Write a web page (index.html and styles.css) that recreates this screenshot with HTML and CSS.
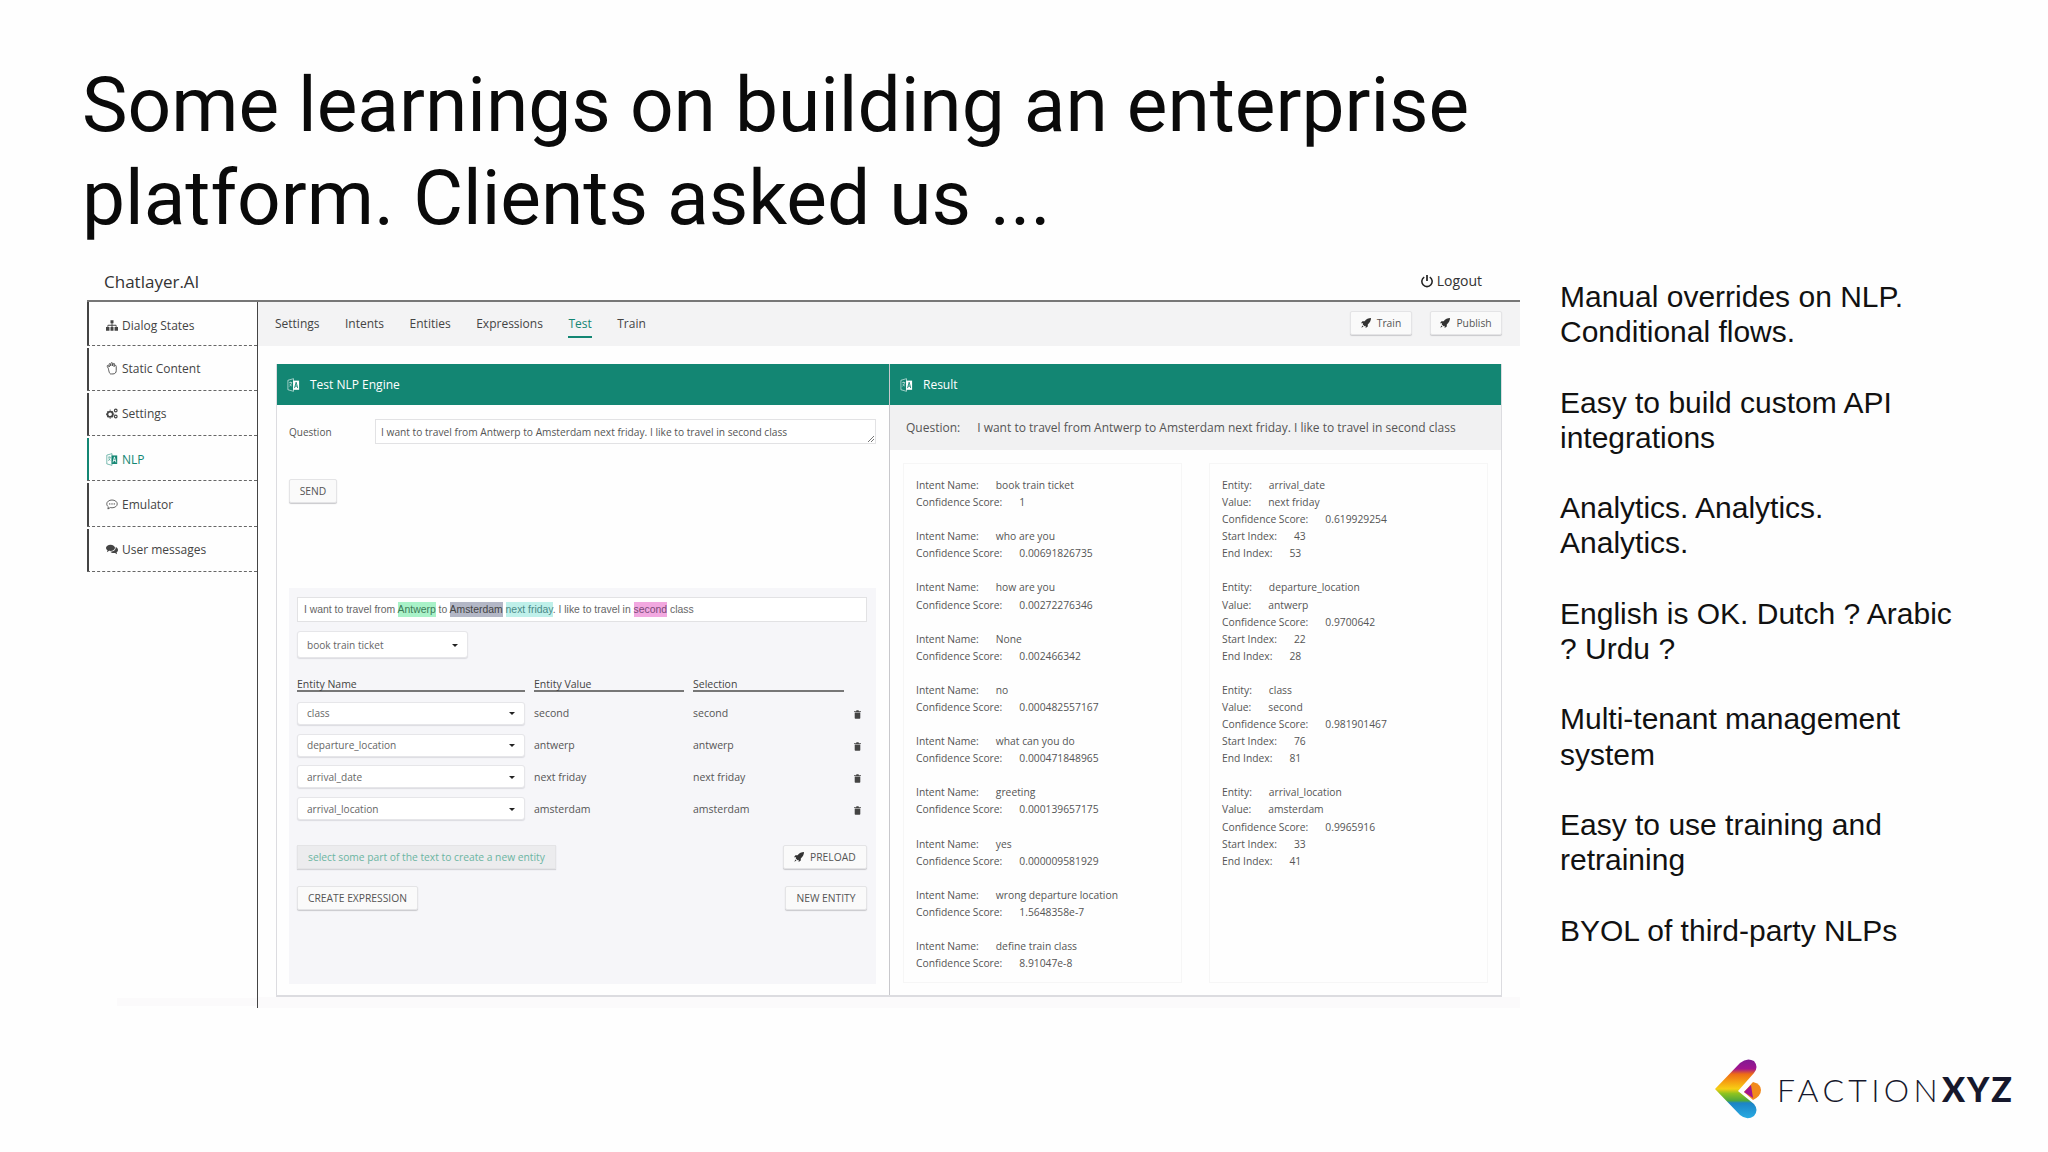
FILE: index.html
```html
<!DOCTYPE html>
<html lang="en">
<head>
<meta charset="utf-8">
<title>Some learnings on building an enterprise platform</title>
<link rel="stylesheet" href="styles.css">
</head>
<body>
<svg class="defs" width="0" height="0" aria-hidden="true">
  <defs>
    <symbol id="i-sitemap" viewBox="0 0 16 14"><path d="M6 0h4v4H8.600v2H13a1 1 0 0 1 1 1v2h2v5h-4.600V9h1.600V7.200H8.600V9H10v5H6V9h1.400V7.200H3V9h1.600v5H0V9h2V7a1 1 0 0 1 1-1h4.400V4H6z" fill="currentColor"/></symbol>
    <symbol id="i-hand" viewBox="0 0 14 16"><path d="M2.500 8 1.200 5.500c-.6-1.100.8-1.900 1.500-.9l1 1.500L3.400 3c-.1-1.200 1.500-1.400 1.700-.2l.4 2 .3-3.200c.1-1.200 1.700-1.200 1.800 0l.2 3.200.7-2.500c.3-1.100 1.800-.8 1.600.4l-.6 3 1-1.200c.8-.9 2 0 1.700 1v5.200c0 2.400-1.700 4-4 4H6.500C4 15.500 3.300 12 2.500 8z" fill="none" stroke="currentColor" stroke-width="1.100"/></symbol>
    <symbol id="i-cogs" viewBox="0 0 16 14"><circle cx="5.500" cy="8" r="3.600" fill="none" stroke="currentColor" stroke-width="2.400"/><path d="M5 2.500h1M5 13.500h1M0 8h1M10 8h1M1.800 4.300l.7.700M8.500 11l.7.700M1.800 11.700l.7-.7M8.500 5l.7-.7" stroke="currentColor" stroke-width="1.800"/><circle cx="13" cy="3" r="1.800" fill="none" stroke="currentColor" stroke-width="1.500"/><circle cx="13" cy="11" r="1.800" fill="none" stroke="currentColor" stroke-width="1.500"/></symbol>
    <symbol id="i-lang" viewBox="0 0 14 16"><path d="M.6 2.600 7 .8v14.400L.6 13.400z" fill="none" stroke="currentColor" stroke-width=".9" opacity=".75"/><path d="M6.500 3H13.400v10.500H6.500z" fill="currentColor"/><path d="M8.200 11.500 10 4.800l1.800 6.700M8.800 9.300h2.400" fill="none" stroke="var(--glyph,#fff)" stroke-width="1"/><path d="M2 5.200h3.400M3.700 4.200v1M5 5.200c-.4 2-1.400 3.500-2.800 4.500M2.700 6.700c.5 1.200 1.300 2 2.400 2.500" fill="none" stroke="currentColor" stroke-width=".6"/></symbol>
    <symbol id="i-comment" viewBox="0 0 16 14"><path d="M8 1c3.900 0 7 2.300 7 5.200s-3.100 5.200-7 5.200c-.8 0-1.500-.1-2.200-.3L2.500 13l.6-2.900C1.800 9.100 1 7.700 1 6.200 1 3.300 4.100 1 8 1z" fill="none" stroke="currentColor" stroke-width="1.100"/><circle cx="5" cy="6.200" r=".9" fill="currentColor"/><circle cx="8" cy="6.200" r=".9" fill="currentColor"/><circle cx="11" cy="6.200" r=".9" fill="currentColor"/></symbol>
    <symbol id="i-comments" viewBox="0 0 16 14"><path d="M6 .5c3.300 0 6 1.900 6 4.200S9.300 9 6 9c-.6 0-1.200-.1-1.800-.2L1.200 10.500l.8-2.400C.8 7.300 0 6.100 0 4.700 0 2.400 2.700.5 6 .5z" fill="currentColor"/><path d="M13 3.800c1.800.7 3 2.100 3 3.700 0 1.300-.7 2.400-1.900 3.200l.7 2.500-2.800-1.700c-.6.100-1.100.2-1.700.2-1.900 0-3.600-.7-4.600-1.800 3.800.3 7.500-1.800 7.300-6.100z" fill="currentColor"/></symbol>
    <symbol id="i-rocket" viewBox="0 0 14 14"><path d="M14 0C10.500 0 7.500 1.500 5 4.500H2L0 7.500h3L2.500 9 5 11.500 6.500 11v3l3-2V9c3-2.500 4.500-5.500 4.500-9z" fill="currentColor"/><path d="M2 10.500.5 13.500l3-1.500z" fill="currentColor"/></symbol>
    <symbol id="i-trash" viewBox="0 0 10 12"><path d="M3.500 0h3l.5 1.200h3V2.500H0V1.200h3zM1 3.200h8V11a1 1 0 0 1-1 1H2a1 1 0 0 1-1-1z" fill="currentColor"/></symbol>
    <symbol id="i-power" viewBox="0 0 14 16"><path d="M7 1v7" stroke="currentColor" stroke-width="2" fill="none"/><path d="M3.800 3.500a6 6 0 1 0 6.400 0" stroke="currentColor" stroke-width="1.800" fill="none"/></symbol>
    <linearGradient id="logo-grad" x1="0" y1="0" x2="0" y2="1">
      <stop offset="0" stop-color="#7e1a93"/>
      <stop offset=".16" stop-color="#a2148f"/>
      <stop offset=".25" stop-color="#ee6c16"/>
      <stop offset=".38" stop-color="#f6a012"/>
      <stop offset=".5" stop-color="#f7cf14"/>
      <stop offset=".58" stop-color="#8fc31f"/>
      <stop offset=".7" stop-color="#4fa83d"/>
      <stop offset=".74" stop-color="#1c84c6"/>
      <stop offset="1" stop-color="#29abe2"/>
    </linearGradient>
  </defs>
</svg>

<div class="slide">
  <h1 class="title">Some learnings on building an enterprise<br>platform. Clients asked us ...</h1>

  <div class="content">
    <div class="app">
      <header class="app-top">
        <span class="brand">Chatlayer.AI</span>
        <span class="logout"><svg class="ic-power"><use href="#i-power"/></svg>Logout</span>
      </header>
      <div class="app-body">
        <nav class="side">
          <a class="side-item"><svg class="ic"><use href="#i-sitemap"/></svg>Dialog States</a>
          <a class="side-item"><svg class="ic"><use href="#i-hand"/></svg>Static Content</a>
          <a class="side-item"><svg class="ic"><use href="#i-cogs"/></svg>Settings</a>
          <a class="side-item is-active"><svg class="ic"><use href="#i-lang"/></svg>NLP</a>
          <a class="side-item"><svg class="ic"><use href="#i-comment"/></svg>Emulator</a>
          <a class="side-item"><svg class="ic"><use href="#i-comments"/></svg>User messages</a>
        </nav>
        <main class="main">
          <div class="tabs">
            <a class="tab">Settings</a>
            <a class="tab">Intents</a>
            <a class="tab">Entities</a>
            <a class="tab">Expressions</a>
            <a class="tab is-active">Test</a>
            <a class="tab">Train</a>
            <div class="tab-actions">
              <button class="btn btn-train"><svg class="ic-rocket"><use href="#i-rocket"/></svg>Train</button>
              <button class="btn btn-publish"><svg class="ic-rocket"><use href="#i-rocket"/></svg>Publish</button>
            </div>
          </div>
          <div class="panels">
            <section class="panel">
              <h2 class="panel-head"><svg class="ic-head"><use href="#i-lang"/></svg>Test NLP Engine</h2>
              <div class="test-body">
                <div class="q-row">
                  <label class="q-label">Question</label>
                  <div class="q-input">I want to travel from Antwerp to Amsterdam next friday. I like to travel in second class</div>
                </div>
                <button class="btn btn-send">SEND</button>
                <div class="sandbox">
                  <div class="sentence">I want to travel from <mark class="m-green">Antwerp</mark> to <mark class="m-slate">Amsterdam</mark> <mark class="m-cyan">next friday</mark>. I like to travel in <mark class="m-pink">second</mark> class</div>
                  <div class="select select-intent">book train ticket</div>
                  <div class="entity-grid">
                    <div class="eh">Entity Name</div><div class="eh">Entity Value</div><div class="eh">Selection</div><div></div>
                    <div class="select">class</div><div>second</div><div>second</div><svg class="ic-trash"><use href="#i-trash"/></svg>
                    <div class="select">departure_location</div><div>antwerp</div><div>antwerp</div><svg class="ic-trash"><use href="#i-trash"/></svg>
                    <div class="select">arrival_date</div><div>next friday</div><div>next friday</div><svg class="ic-trash"><use href="#i-trash"/></svg>
                    <div class="select">arrival_location</div><div>amsterdam</div><div>amsterdam</div><svg class="ic-trash"><use href="#i-trash"/></svg>
                  </div>
                  <div class="act-row act-first">
                    <div class="hint">select some part of the text to create a new entity</div>
                    <button class="btn btn-preload"><svg class="ic-rocket"><use href="#i-rocket"/></svg>PRELOAD</button>
                  </div>
                  <div class="act-row">
                    <button class="btn btn-wide">CREATE EXPRESSION</button>
                    <button class="btn btn-new">NEW ENTITY</button>
                  </div>
                </div>
              </div>
            </section>
            <section class="panel panel-result">
              <h2 class="panel-head"><svg class="ic-head"><use href="#i-lang"/></svg>Result</h2>
              <div class="q-strip"><span>Question:</span><span>I want to travel from Antwerp to Amsterdam next friday. I like to travel in second class</span></div>
              <div class="cards">
                <div class="card">
                  <dl class="kv"><div><dt>Intent Name:</dt><dd>book train ticket</dd></div><div><dt>Confidence Score:</dt><dd>1</dd></div></dl>
                  <dl class="kv"><div><dt>Intent Name:</dt><dd>who are you</dd></div><div><dt>Confidence Score:</dt><dd>0.00691826735</dd></div></dl>
                  <dl class="kv"><div><dt>Intent Name:</dt><dd>how are you</dd></div><div><dt>Confidence Score:</dt><dd>0.00272276346</dd></div></dl>
                  <dl class="kv"><div><dt>Intent Name:</dt><dd>None</dd></div><div><dt>Confidence Score:</dt><dd>0.002466342</dd></div></dl>
                  <dl class="kv"><div><dt>Intent Name:</dt><dd>no</dd></div><div><dt>Confidence Score:</dt><dd>0.000482557167</dd></div></dl>
                  <dl class="kv"><div><dt>Intent Name:</dt><dd>what can you do</dd></div><div><dt>Confidence Score:</dt><dd>0.000471848965</dd></div></dl>
                  <dl class="kv"><div><dt>Intent Name:</dt><dd>greeting</dd></div><div><dt>Confidence Score:</dt><dd>0.000139657175</dd></div></dl>
                  <dl class="kv"><div><dt>Intent Name:</dt><dd>yes</dd></div><div><dt>Confidence Score:</dt><dd>0.000009581929</dd></div></dl>
                  <dl class="kv"><div><dt>Intent Name:</dt><dd>wrong departure location</dd></div><div><dt>Confidence Score:</dt><dd>1.5648358e-7</dd></div></dl>
                  <dl class="kv"><div><dt>Intent Name:</dt><dd>define train class</dd></div><div><dt>Confidence Score:</dt><dd>8.91047e-8</dd></div></dl>
                </div>
                <div class="card card-entities">
                  <dl class="kv"><div><dt>Entity:</dt><dd>arrival_date</dd></div><div><dt>Value:</dt><dd>next friday</dd></div><div><dt>Confidence Score:</dt><dd>0.619929254</dd></div><div><dt>Start Index:</dt><dd>43</dd></div><div><dt>End Index:</dt><dd>53</dd></div></dl>
                  <dl class="kv"><div><dt>Entity:</dt><dd>departure_location</dd></div><div><dt>Value:</dt><dd>antwerp</dd></div><div><dt>Confidence Score:</dt><dd>0.9700642</dd></div><div><dt>Start Index:</dt><dd>22</dd></div><div><dt>End Index:</dt><dd>28</dd></div></dl>
                  <dl class="kv"><div><dt>Entity:</dt><dd>class</dd></div><div><dt>Value:</dt><dd>second</dd></div><div><dt>Confidence Score:</dt><dd>0.981901467</dd></div><div><dt>Start Index:</dt><dd>76</dd></div><div><dt>End Index:</dt><dd>81</dd></div></dl>
                  <dl class="kv"><div><dt>Entity:</dt><dd>arrival_location</dd></div><div><dt>Value:</dt><dd>amsterdam</dd></div><div><dt>Confidence Score:</dt><dd>0.9965916</dd></div><div><dt>Start Index:</dt><dd>33</dd></div><div><dt>End Index:</dt><dd>41</dd></div></dl>
                </div>
              </div>
            </section>
          </div>
        </main>
      </div>
    </div>

    <ul class="points">
      <li>Manual overrides on NLP. Conditional flows.</li>
      <li>Easy to build custom API integrations</li>
      <li>Analytics. Analytics. Analytics.</li>
      <li>English is OK. Dutch ? Arabic ? Urdu ?</li>
      <li>Multi-tenant management system</li>
      <li>Easy to use training and retraining</li>
      <li>BYOL of third-party NLPs</li>
    </ul>
  </div>

  <footer class="foot">
    <svg class="logo-mark" viewBox="0 0 46 61" aria-hidden="true">
      <path d="M0 31 25 5Q32-1 39 3 44 9 39 15L23 33 39 46Q44 52 39 58 32 63 25 57Z" fill="url(#logo-grad)"/>
      <path d="M29 34 38 24Q46 26 46 32 46 38 38 42Z" fill="#f28a1c"/>
      <path d="M29 34 36 27 38 40Z" fill="#a2148f"/>
    </svg>
    <span class="logo-text">FACTION<b>XYZ</b></span>
  </footer>
</div>
</body>
</html>
```
FILE: styles.css
```css
* { box-sizing: border-box; }
html, body { margin: 0; padding: 0; background: #fefefe; }
.defs { position: absolute; }
.slide {
  width: 2048px;
  height: 1152px;
  overflow: hidden;
  display: flex;
  flex-direction: column;
  font-family: "Open Sans", sans-serif;
  color: #555;
}
.title {
  margin: 59px 0 15px 82px;
  font: 400 76.650px/93px Roboto, sans-serif;
  color: #0a0a0a;
}
.content { display: flex; align-items: flex-start; }

/* app window */
.app { width: 1433px; margin-left: 87px; flex: none; }
.app-top {
  height: 42px;
  display: flex;
  align-items: center;
  justify-content: space-between;
  padding: 3px 38px 0 17px;
  border-bottom: 2px solid #777;
  color: #333;
}
.brand { font-size: 17px; }
.logout { display: flex; align-items: center; gap: 4px; font-size: 14px; margin-top: -2px; }
.ic-power { width: 12px; height: 14px; color: #222; }
.app-body { display: flex; height: 706px; }
.side {
  width: 171px;
  flex: none;
  border-right: 1px solid #444;
  background: linear-gradient(to top, transparent 0 2px, #fbfafb 2px 10px, transparent 10px) no-repeat 30px 0 / 140px 100%;
}
.side-item {
  height: 45.300px;
  display: flex;
  align-items: center;
  gap: 4px;
  padding: 2px 0 0 19px;
  font-size: 12px;
  color: #444;
  border-bottom: 1px dashed #666;
  background: linear-gradient(#444, #444) no-repeat 0 2px / 2px calc(100% - 2px);
}
.side-item:first-child { height: 43.500px; padding-top: 4px; background-position: 0 0; background-size: 2px 100%; }
.side-item.is-active { background-image: linear-gradient(#138673, #138673); color: #138673; --glyph: #fff; }
.ic { width: 12px; height: 13px; flex: none; }
.main {
  flex: 1;
  display: flex;
  flex-direction: column;
  background: linear-gradient(to top, #fbfafb 0 11px, #fefefe 11px);
}

.tabs {
  height: 44px;
  flex: none;
  display: flex;
  align-items: center;
  gap: 25.500px;
  padding: 0 18px 2px 17px;
  background: #f3f3f4;
  font-size: 12px;
  color: #444;
}
.tab { position: relative; }
.tab.is-active { color: #138673; }
.tab.is-active::after {
  content: "";
  position: absolute;
  left: 0;
  right: 0;
  bottom: -6px;
  height: 2px;
  background: #138673;
}
.tab-actions { margin-left: auto; display: flex; gap: 18px; }
.btn {
  height: 24px;
  padding: 0 10px;
  display: inline-flex;
  align-items: center;
  gap: 6px;
  background: #fafafa;
  border: 1px solid #e4e4e6;
  border-radius: 2px;
  box-shadow: 0 1px 1px #c9c9cc;
  font: 400 10.300px "Open Sans", sans-serif;
  color: #555;
}
.btn-train { width: 62px; justify-content: center; padding: 0; }
.btn-publish { width: 72px; justify-content: center; padding: 0; }
.ic-rocket { width: 10px; height: 10px; color: #333; flex: none; }

.panels {
  margin: 18px 18px 11px;
  flex: 1;
  display: flex;
  border-left: 1px solid #dcdce0;
  border-right: 1px solid #dcdce0;
  border-bottom: 2px solid #dcdce0;
  background: #fefefe;
}
.panel { width: 50%; display: flex; flex-direction: column; }
.panel-result { border-left: 1px solid #c8c8cc; }
.panel-head {
  height: 41px;
  margin: 0;
  flex: none;
  display: flex;
  align-items: center;
  gap: 10px;
  padding-left: 10px;
  background: #138673;
  color: #fff;
  font: 400 12px "Open Sans", sans-serif;
  --glyph: #138673;
}
.ic-head { width: 13px; height: 14px; }

/* test form */
.test-body { padding: 14px 13px 0 12px; color: #555; font-size: 10px; }
.q-row { display: flex; align-items: center; }
.q-label { width: 86px; }
.q-input {
  flex: 1;
  height: 25px;
  padding: 0 5px;
  display: flex;
  align-items: center;
  border: 1px solid #e2e2e4;
  background: #fff;
  color: #555;
  font-size: 10.200px;
  position: relative;
}
.q-input::after {
  content: "";
  position: absolute;
  right: 1px;
  bottom: 1px;
  width: 6px;
  height: 6px;
  background: linear-gradient(135deg, transparent 45%, #777 45% 55%, transparent 55% 70%, #777 70% 80%, transparent 80%);
}
.btn-send { margin-top: 35px; width: 48px; padding: 0; justify-content: center; display: flex; }
.sandbox {
  margin-top: 85px;
  width: 587px;
  height: 396px;
  padding: 9px 9px 9px 8px;
  background: #f6f6f9;
}
.sentence {
  height: 25px;
  padding: 0 6px;
  white-space: nowrap;
  background: #fff;
  border: 1px solid #e2e2e4;
  font: 400 10.400px/23px "Liberation Sans", Arial, sans-serif;
  color: #666;
}
mark { color: inherit; padding: 2px 0; }
.m-green { background: #a9f2c8; color: #3d7a58; }
.m-slate { background: #b3b7c6; color: #444; }
.m-cyan { background: #bff0ea; color: #4b8a88; }
.m-pink { background: #f2a8e0; color: #7a4a78; }
.select {
  height: 23px;
  padding-left: 9px;
  position: relative;
  display: flex;
  align-items: center;
  background: #fff;
  border: 1px solid #e6e6e9;
  border-radius: 3px;
  box-shadow: 0 1px 1px #dcdce0;
  font-size: 10.100px;
  color: #666;
}
.select::after {
  content: "";
  position: absolute;
  right: 9px;
  top: 50%;
  margin-top: -1px;
  border: 3px solid transparent;
  border-top: 3px solid #222;
  border-bottom: 0;
}
.select-intent { width: 171px; height: 27px; margin-top: 9px; }
.entity-grid {
  margin-top: 13px;
  display: grid;
  grid-template-columns: 228px 150px 151px 1fr;
  column-gap: 9px;
  row-gap: 8.700px;
  align-items: center;
  font-size: 10.500px;
  color: #555;
}
.eh { height: 21px; line-height: 26px; margin-bottom: 1.300px; border-bottom: 2px solid #777; color: #444; white-space: nowrap; }
.ic-trash { width: 7px; height: 9px; color: #444; justify-self: end; margin: 3px 6px 0 0; }
.act-row { display: flex; justify-content: space-between; margin-top: 17px; }
.act-first { margin-top: 25px; }
.hint {
  height: 24px;
  width: 259px;
  padding: 0 0 0 10px;
  display: flex;
  align-items: center;
  white-space: nowrap;
  background: #ececee;
  border: 1px solid #e4e4e6;
  box-shadow: 0 1px 1px #d4d4d8;
  color: #6bb5a2;
  font-size: 10.270px;
}
.btn-preload { width: 84px; }
.btn-wide { width: 121px; justify-content: center; padding: 0; }
.btn-new { width: 82px; justify-content: center; padding: 0; }

/* result */
.q-strip {
  height: 45px;
  flex: none;
  display: flex;
  align-items: center;
  gap: 17px;
  padding-left: 16px;
  background: #f1f1f2;
  font-size: 12px;
  color: #555;
}
.cards { display: flex; gap: 27px; padding: 13px 13px 0 13px; }
.card {
  width: 279px;
  height: 520px;
  padding: 13px 12px;
  border: 1px solid #f6f6f6;
  font-size: 10.300px;
  color: #555;
}
.kv { margin: 0 0 17.080px; }
.kv div { display: flex; gap: 17px; height: 17.080px; line-height: 17.080px; }
.kv dt { font-weight: 400; }
.kv dd { margin: 0; }

/* bullets */
.points {
  list-style: none;
  margin: 0 0 0 40px;
  padding: 19px 0 0;
  width: 395px;
  display: flex;
  flex-direction: column;
  gap: 35.200px;
  font: 400 30px/35.200px "Liberation Sans", Arial, sans-serif;
  color: #111;
}

/* logo */
.foot {
  margin-top: 50px;
  padding-right: 34px;
  display: flex;
  justify-content: flex-end;
  align-items: center;
  gap: 16px;
}
.logo-mark { width: 46px; height: 61px; flex: none; }
.logo-text {
  font: 300 32px/1 Lato, sans-serif;
  letter-spacing: 4.300px;
  color: #16182c;
}
.logo-text b { font-weight: 900; font-size: 34px; letter-spacing: 2px; }
```
